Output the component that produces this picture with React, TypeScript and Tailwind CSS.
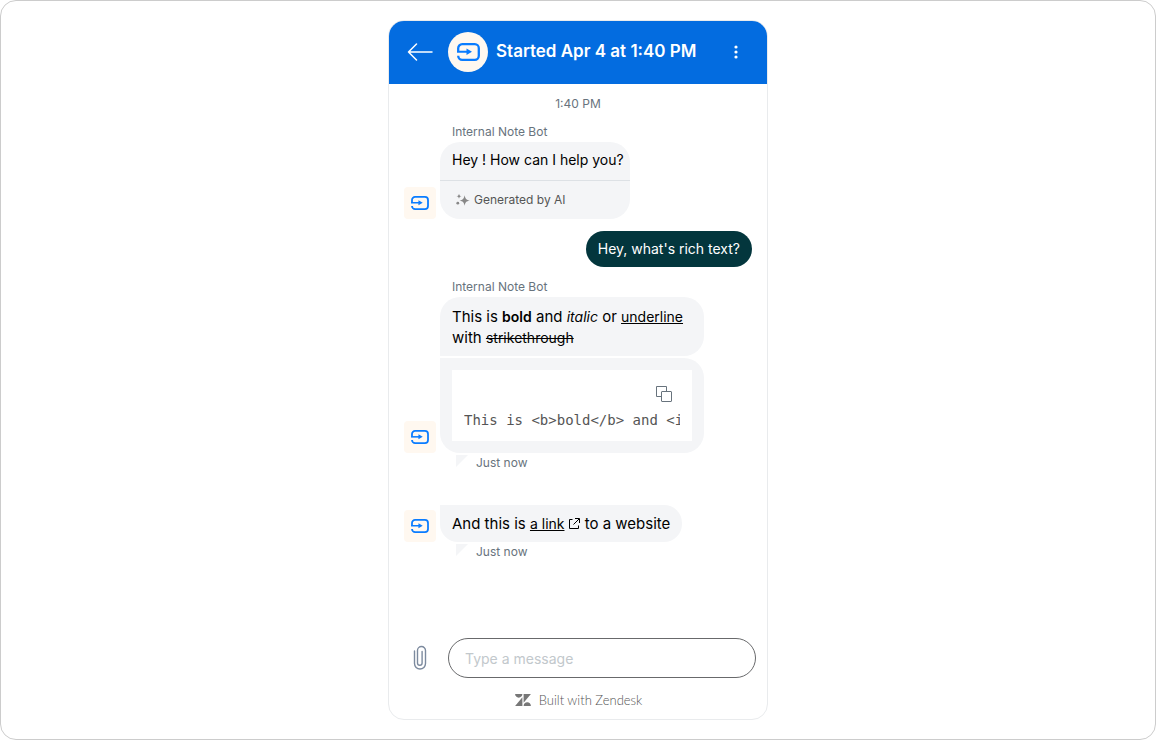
import type { ReactNode } from "react";

const BotLogo = ({ className }: { className: string }) => (
  <svg viewBox="0 0 23 18" fill="none" className={className} aria-hidden="true">
    <path
      d="M1.2 8.6V5.2a4 4 0 0 1 4-4h12.600a4 4 0 0 1 4 4v7.600a4 4 0 0 1-4 4H5.200a4 4 0 0 1-4-4"
      stroke="currentColor"
      strokeWidth="2.3"
    />
    <path d="M0 8.800H11" stroke="currentColor" strokeWidth="2" />
    <path d="M9.500 5.600 15 8.800l-5.500 3.200z" fill="currentColor" />
  </svg>
);

const BotAvatar = () => (
  <div className="flex h-8 w-8 shrink-0 items-center justify-center rounded bg-[#fff8f0] text-[#0a7cff]">
    <BotLogo className="h-[14px] w-[18px]" />
  </div>
);

const BotRow = ({ children }: { children: ReactNode }) => (
  <div className="flex items-end gap-1">
    <BotAvatar />
    <div className="flex min-w-0 flex-col items-start gap-0.5">{children}</div>
  </div>
);

const BotName = () => (
  <p className="pl-12 text-xs leading-5 text-[#68737d]">Internal Note Bot</p>
);

const JustNow = () => (
  <div className="flex gap-2 pt-0.5 pl-[52px]">
    <svg viewBox="0 0 12 12" className="h-3 w-3" aria-hidden="true">
      <path d="M0 0h12L0 12z" fill="#f4f5f7" />
    </svg>
    <span className="text-xs leading-4 text-[#68737d]">Just now</span>
  </div>
);

const Header = () => (
  <header className="flex h-[63px] items-center bg-[#036ce0] pr-[15px] pb-0.5 pl-[18px] text-white">
    <button type="button" aria-label="Back" className="cursor-pointer">
      <svg viewBox="0 0 26 18" fill="none" stroke="currentColor" strokeWidth="1.5" className="h-[18px] w-[26px]">
        <path d="M25 9H1.5M9.5 1l-8 8 8 8" strokeLinecap="round" strokeLinejoin="round" />
      </svg>
    </button>
    <div className="ml-[15px] flex h-10 w-10 shrink-0 items-center justify-center rounded-full bg-[#fff8f0] text-[#0a7cff]">
      <BotLogo className="h-[18px] w-[23px]" />
    </div>
    <h1 className="ml-2 flex-1 text-[17px] font-semibold whitespace-nowrap">
      Started Apr 4 at 1:40 PM
    </h1>
    <button type="button" aria-label="Options" className="flex h-8 w-8 cursor-pointer items-center justify-center">
      <svg viewBox="0 0 4 16" fill="currentColor" className="h-4 w-1">
        <circle cx="2" cy="3" r="1.6" />
        <circle cx="2" cy="8" r="1.6" />
        <circle cx="2" cy="13" r="1.6" />
      </svg>
    </button>
  </header>
);

const CodeBlock = () => (
  <div className="w-[240px] bg-white px-3 pt-4 pb-[11px]">
    <div className="flex justify-end pr-2">
      <button type="button" aria-label="Copy code" className="block cursor-pointer text-[#68737d]">
        <svg viewBox="0 0 16 16" fill="none" stroke="currentColor" className="h-4 w-4">
          <path d="M5 10.5H.5V.5h10V5" />
          <rect x="5.5" y="5.5" width="10" height="10" rx="0.5" />
        </svg>
      </button>
    </div>
    <pre className="mt-2 overflow-hidden font-['DejaVu_Sans_Mono',monospace] text-sm leading-5 text-[#555]">
      {"This is <b>bold</b> and <i>italic</i>"}
    </pre>
  </div>
);

const Messages = () => (
  <main className="flex flex-1 flex-col px-[15px] pt-2.5">
    <p className="text-center text-xs leading-5 text-[#68737d]">1:40 PM</p>

    <div className="mt-2">
      <BotName />
      <BotRow>
        <div className="w-[190px] rounded-[20px] bg-[#f4f5f7]">
          <p className="border-b border-[#dde1e5] px-3 pt-2 pb-2.5 text-sm leading-5 whitespace-nowrap text-black">
            Hey ! How can I help you?
          </p>
          <p className="flex h-[38px] items-center gap-1 px-4 text-xs text-[#555]">
            <svg viewBox="0 0 14 14" fill="#888" className="h-3.5 w-3.5" aria-hidden="true">
              <path d="M8.600 2.200c.8 3.700 1.600 4.500 5.200 5.300-3.600.8-4.400 1.600-5.200 5.300-.8-3.700-1.600-4.500-5.200-5.300 3.600-.8 4.400-1.600 5.200-5.300z" />
              <path d="M3 .8c.4 1.700.8 2.100 2.500 2.500-1.700.4-2.100.8-2.500 2.500C2.600 4.100 2.200 3.700.5 3.300 2.200 2.900 2.600 2.500 3 .8z" />
              <circle cx="1.800" cy="10.200" r="1.400" />
            </svg>
            Generated by AI
          </p>
        </div>
      </BotRow>
    </div>

    <div className="mt-3 flex justify-end">
      <p className="rounded-[18px] bg-[#03363d] px-3 py-2 text-sm leading-5 text-white">
        Hey, what's rich text?
      </p>
    </div>

    <div className="mt-2.5">
      <BotName />
      <BotRow>
        <div className="w-[264px] rounded-[20px] rounded-bl-none bg-[#f4f5f7] px-3 pt-[9px] pb-2 text-[15px] leading-[21px] text-black">
          This is <b className="text-sm font-semibold">bold</b> and <i className="text-sm">italic</i> or{" "}
          <u className="text-sm">underline</u> with <s className="text-sm">strikethrough</s>
        </div>
        <div className="rounded-[20px] rounded-tl-none bg-[#f4f5f7] p-3">
          <CodeBlock />
        </div>
      </BotRow>
      <JustNow />
    </div>

    <div className="mt-[34px]">
      <BotRow>
        <div className="rounded-[18px] rounded-tl-none bg-[#f4f5f7] px-3 py-2 text-[15px] leading-[21px] text-black">
          And this is{" "}
          <a href="#website" className="text-sm">
            <span className="underline">a link</span>
            <svg viewBox="0 0 12 12" fill="none" stroke="currentColor" className="ml-1 inline h-3 w-3 align-[-1px]" aria-hidden="true">
              <path d="M4.500 1.500h-3v9h9v-3M7 .5h4.500V5M11 1 5.500 6.500" />
            </svg>
          </a>{" "}
          to a website
        </div>
      </BotRow>
      <JustNow />
    </div>
  </main>
);

const Composer = () => (
  <footer className="pr-[11px] pb-[9px] pl-4">
    <div className="flex items-center">
      <button type="button" aria-label="Attach a file" className="flex h-8 w-[30px] cursor-pointer items-center justify-center text-[#7c8a9e]">
        <svg viewBox="0 0 14 26" fill="none" stroke="currentColor" strokeWidth="1.4" strokeLinecap="round" className="h-[26px] w-3.5">
          <path d="M1.500 6v12.500a5.500 5.500 0 0 0 11 0V5.500a4 4 0 0 0-8 0V18a2.300 2.300 0 0 0 4.600 0V6.500" />
        </svg>
      </button>
      <input
        type="text"
        aria-label="Type a message"
        placeholder="Type a message"
        className="ml-[13px] h-10 min-w-0 flex-1 rounded-[20px] border border-[#68696b] px-4 text-sm outline-none placeholder:text-[#c2c8cc]"
      />
    </div>
    <a href="#zendesk" className="mt-3 flex items-center justify-center gap-2 pr-1 font-[Lato,sans-serif] text-[13px] leading-5 font-light text-[#555]">
      <svg viewBox="0 2.900 24 18.200" fill="#777" className="h-3 w-4" aria-hidden="true">
        <path d="M12.914 2.904V16.290L24 2.905H12.914zM0 2.906C0 5.966 2.483 8.450 5.543 8.450s5.542-2.484 5.543-5.544H0zm11.086 4.807L0 21.096h11.086V7.713zm7.370 7.840c-3.063 0-5.542 2.480-5.542 5.543H24c0-3.060-2.480-5.543-5.543-5.543z" />
      </svg>
      Built with Zendesk
    </a>
  </footer>
);

const App = () => {
  return (
    <div className="flex min-h-screen flex-col items-center rounded-2xl border border-[#ccc] bg-white px-4 py-[19px] font-[Inter,sans-serif]">
      <div className="flex w-full max-w-[380px] flex-1 flex-col overflow-hidden rounded-2xl border border-[#e9ebed] bg-white">
        <Header />
        <Messages />
        <Composer />
      </div>
    </div>
  );
};

export default App;
